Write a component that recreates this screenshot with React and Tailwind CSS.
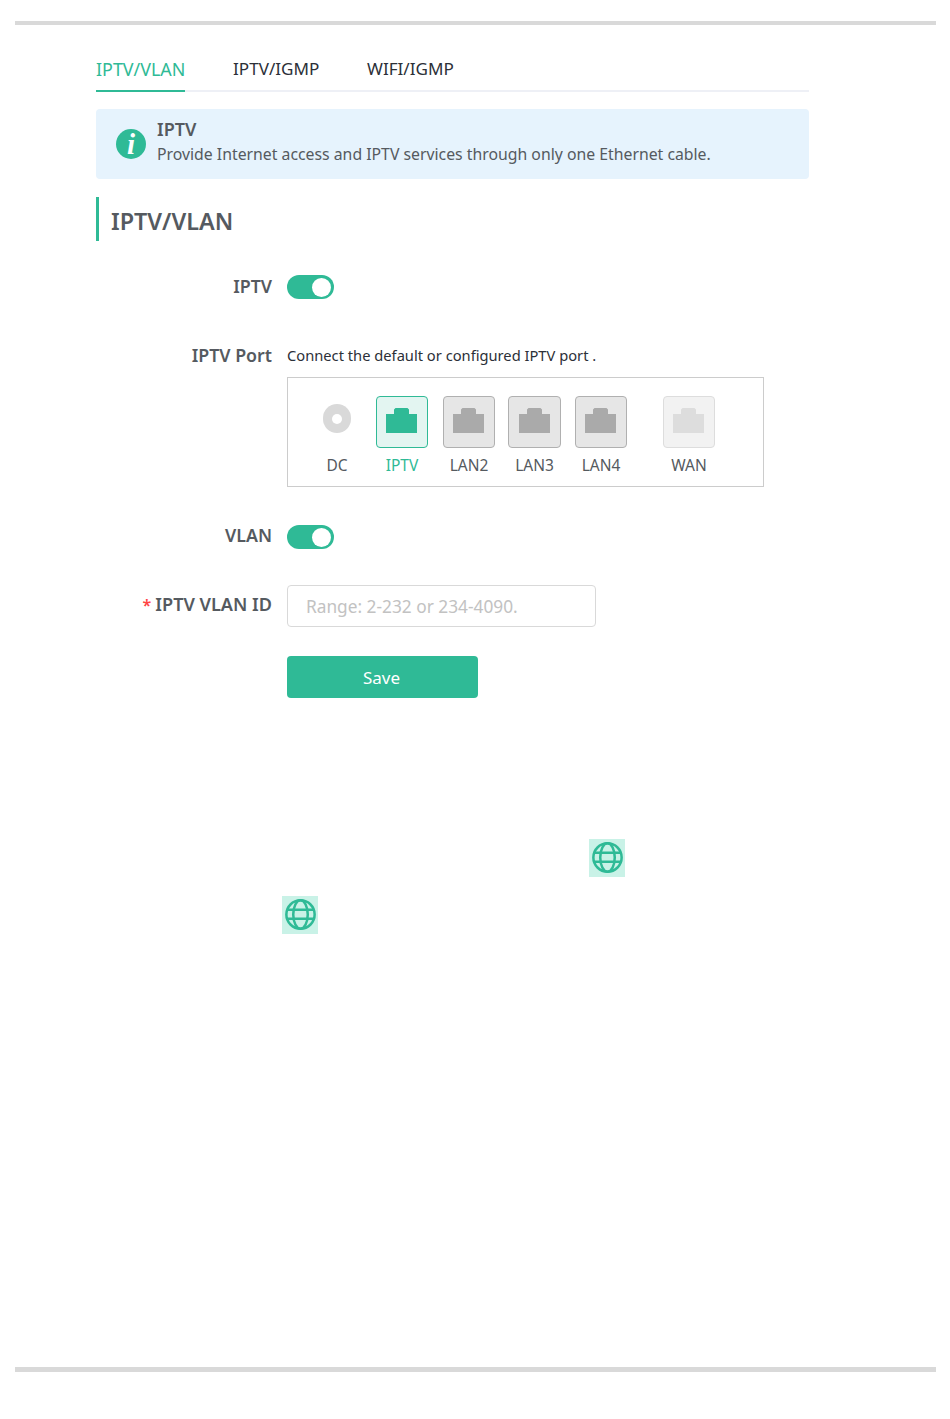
import React from "react";

const font = { fontFamily: '"Noto Sans", sans-serif' };

function Rj45({ className }) {
  return (
    <svg viewBox="0 0 31 25" className={className} fill="currentColor">
      <path d="M0 6h8V1.5L9.5 0h12L23 1.5V6h8v19H0z" />
    </svg>
  );
}

function Toggle() {
  return (
    <div className="flex h-6 w-[47px] items-center justify-end rounded-full bg-[#2fba96] pr-[3px]">
      <div className="h-[19px] w-[19px] rounded-full bg-white" />
    </div>
  );
}

function Port({ label, boxClass, iconClass, labelClass, wrapClass }) {
  return (
    <div className={["flex flex-col items-center", wrapClass].join(" ")}>
      <div className={["flex h-[52px] items-center justify-center rounded border pr-[1px] pb-[3px]", boxClass].join(" ")}>
        <Rj45 className={["h-[25px] w-[31px]", iconClass].join(" ")} />
      </div>
      <div className={["mt-[7px] text-[15.5px] leading-5 whitespace-nowrap", labelClass].join(" ")}>{label}</div>
    </div>
  );
}

function Globe() {
  return (
    <div className="flex h-[38px] w-9 items-center justify-center bg-[#c9f2e7] pb-[2px] pl-[1px]">
      <svg viewBox="0 0 32 32" className="h-[31px] w-[31px] text-[#2fba96]" fill="none" stroke="currentColor" strokeWidth="2.6">
        <circle cx="16" cy="16" r="14.6" />
        <ellipse cx="16" cy="16" rx="7.5" ry="14.6" />
        <path d="M2 11h28M2 20.5h28" />
      </svg>
    </div>
  );
}

function Row({ label, required, className, labelClass, children }) {
  return (
    <div className={["flex", className].join(" ")}>
      <div className={["w-[176px] text-right font-semibold leading-6 whitespace-nowrap text-[#555a60]", labelClass].join(" ")}>
        {required && <span className="mr-[4px] text-base text-[#f44]">*</span>}
        {label}
      </div>
      <div className="ml-[15px]">{children}</div>
    </div>
  );
}

export default function App() {
  return (
    <div className="h-[1419px] w-[950px] bg-white" style={font}>
      <div className="mx-[15px] w-[921px] pt-[21px]">
        <div className="h-1 bg-[#d9d9d9]" />

        <div className="ml-[81px] w-[713px] pt-[32px]">
          <div className="flex h-[35px] border-b-2 border-[#eef0f6] leading-6">
            <div className="h-[35px] w-[89px] whitespace-nowrap border-b-2 border-[#2fba96] text-[17.9px] text-[#2fba96]">IPTV/VLAN</div>
            <div className="ml-12 w-[87px] whitespace-nowrap text-[17.1px] text-[#2c3038]">IPTV/IGMP</div>
            <div className="ml-[47px] whitespace-nowrap text-[17.1px] text-[#2c3038]">WIFI/IGMP</div>
          </div>

          <div className="mt-[17px] flex h-[70px] items-center rounded bg-[#e6f3fd] pl-[20px]">
            <div className="flex h-[30px] w-[30px] items-center justify-center rounded-full bg-[#2fba96] text-[29px] italic font-bold leading-none text-white" style={{ fontFamily: '"Liberation Serif", serif' }}>
              i
            </div>
            <div className="ml-[11px] -mt-[6px]">
              <div className="-mt-[1px] text-[18px] font-semibold leading-[22px] text-[#555a60]">IPTV</div>
              <div className="mt-[4px] whitespace-nowrap text-[15.8px] leading-5 text-[#555a60]">
                Provide Internet access and IPTV services through only one Ethernet cable.
              </div>
            </div>
          </div>

          <div className="mt-[18px] flex h-11 items-center border-l-[3px] border-[#2fba96] pl-3 pt-[6px] text-[23.4px] font-semibold text-[#555a60]">
            IPTV/VLAN
          </div>

          <Row label="IPTV" className="mt-[33px]" labelClass="text-[17.8px]">
            <div className="pt-[1px]"><Toggle /></div>
          </Row>

          <Row label="IPTV Port" className="mt-[44px]" labelClass="text-[17.8px]">
            <div>
              <div className="whitespace-nowrap text-[14.7px] leading-6 text-[#2c3038]">
                Connect the default or configured IPTV port .
              </div>
              <div className="mt-[10px] flex h-[110px] w-[477px] border border-[#cccccc] pt-[18px]">
                <div className="ml-[23px] flex w-[52px] flex-col items-center">
                  <div className="flex h-[52px] items-start pt-2">
                    <div className="flex h-[29px] w-[28px] items-center justify-center rounded-full bg-[#d9d9d9]">
                      <div className="h-[10px] w-[10px] rounded-full bg-white" />
                    </div>
                  </div>
                  <div className="mt-[7px] text-[15.5px] leading-5 text-[#555a60]">DC</div>
                </div>
                <Port label="IPTV" wrapClass="ml-[13px] w-[52px]" boxClass="w-[52px] border-[#2fba96] bg-[#e3f5f1]" iconClass="text-[#2fba96]" labelClass="text-[#2fba96]" />
                <Port label="LAN2" wrapClass="ml-[15px] w-[52px]" boxClass="w-[52px] border-[#b0b0b0] bg-[#e6e6e6]" iconClass="text-[#aaaaaa]" labelClass="text-[#555a60]" />
                <Port label="LAN3" wrapClass="ml-[13px] w-[53px]" boxClass="w-[53px] border-[#b0b0b0] bg-[#e6e6e6]" iconClass="text-[#aaaaaa]" labelClass="text-[#555a60]" />
                <Port label="LAN4" wrapClass="ml-[14px] w-[52px]" boxClass="w-[52px] border-[#b0b0b0] bg-[#e6e6e6]" iconClass="text-[#aaaaaa]" labelClass="text-[#555a60]" />
                <Port label="WAN" wrapClass="ml-[36px] w-[52px]" boxClass="w-[52px] border-[#dddddd] bg-[#f2f2f2]" iconClass="text-[#dddddd]" labelClass="text-[#555a60]" />
              </div>
            </div>
          </Row>

          <Row label="VLAN" className="mt-[37px]" labelClass="-mt-[1px] h-6 text-[17.8px]">
            <div className="pt-[1px]"><Toggle /></div>
          </Row>

          <Row label="IPTV VLAN ID" required className="mt-[36px]" labelClass="pt-[7px] text-[18.1px]">
            <div className="flex h-[42px] w-[309px] items-center rounded border border-[#d9d9d9] pl-[18px] pt-[2px] text-[17.3px] whitespace-nowrap text-[#c2c2c2]">
              Range: 2-232 or 234-4090.
            </div>
            <div className="mt-[29px] flex h-[42px] w-[191px] items-center justify-center rounded bg-[#2fba96] pt-[1px] pr-[2px] text-[17px] text-white">
              Save
            </div>
          </Row>
        </div>

        <div className="mt-[141px] ml-[574px]"><Globe /></div>
        <div className="mt-[19px] ml-[267px]"><Globe /></div>

        <div className="mt-[433px] h-[5px] bg-[#d9d9d9]" />
      </div>
    </div>
  );
}
